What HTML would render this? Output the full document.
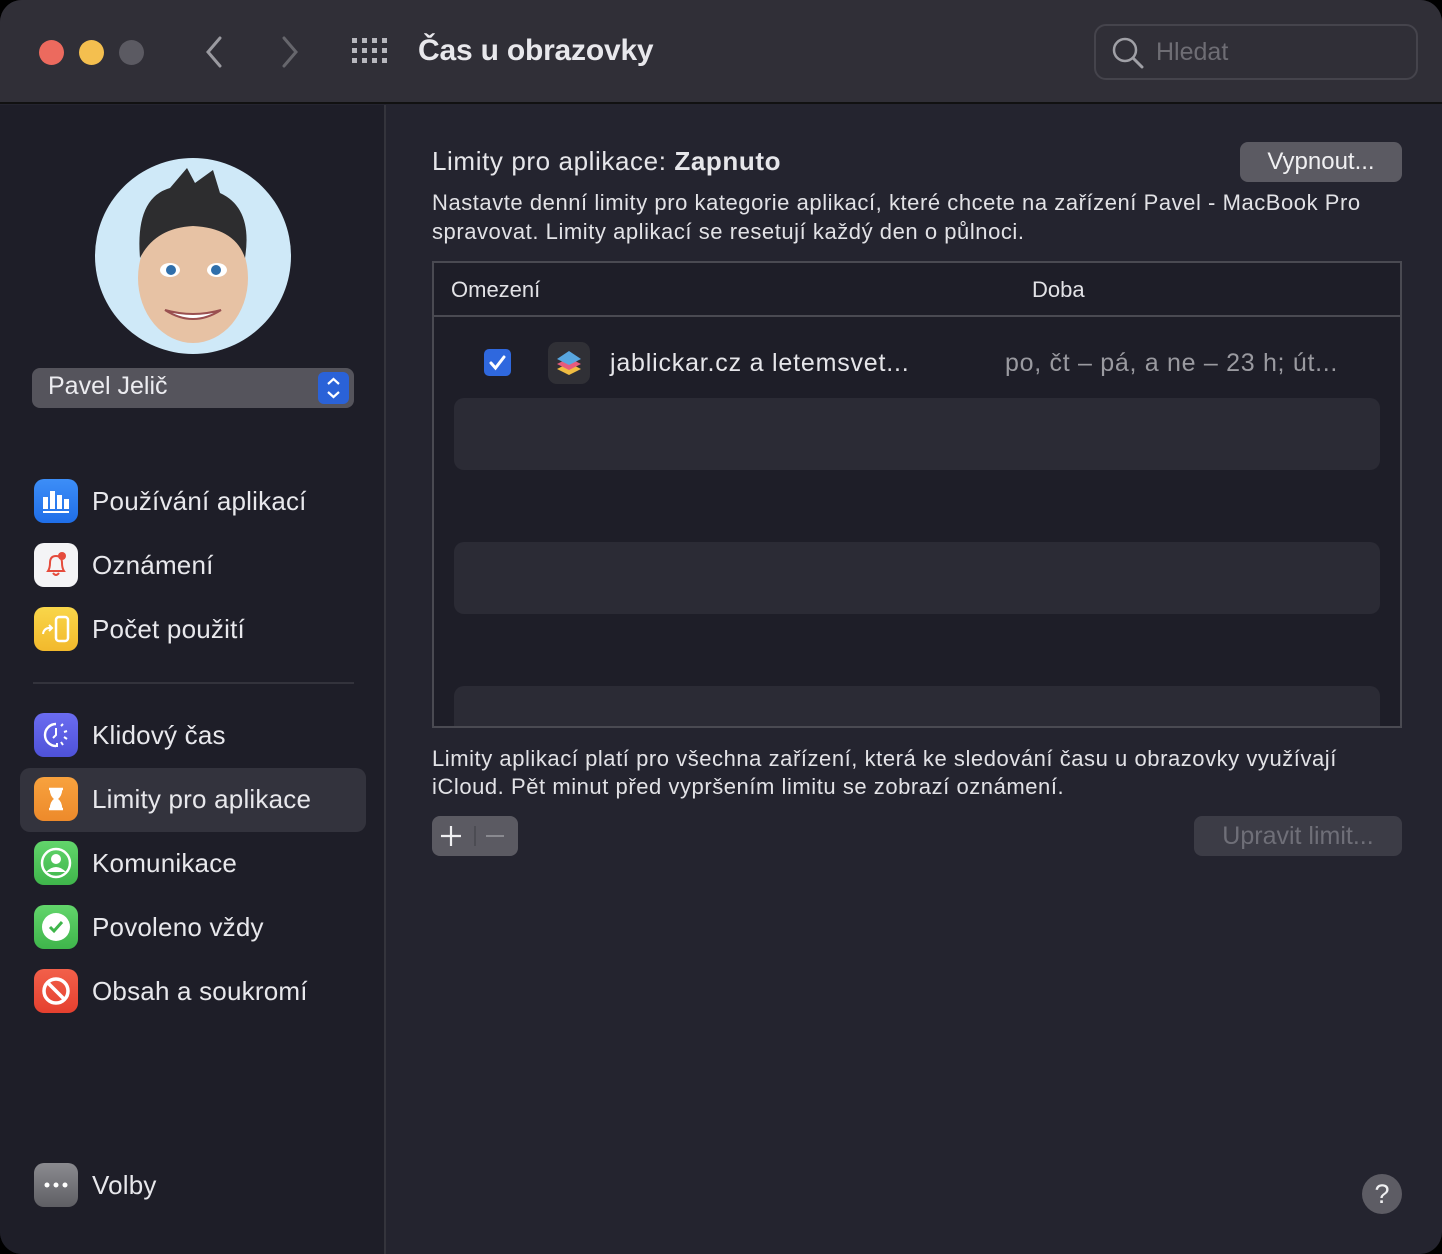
<!DOCTYPE html>
<html><head><meta charset="utf-8"><style>
*{margin:0;padding:0;box-sizing:border-box}
body{width:1442px;height:1254px;background:#000;font-family:"Liberation Sans",sans-serif;color:#e6e6ea;overflow:hidden;position:relative}
.win{position:absolute;left:0;top:0;width:1442px;height:1254px;border-radius:22px;overflow:hidden;background:#24242f}
.title{position:absolute;left:0;top:0;width:1442px;height:104px;background:#302f37;border-bottom:2px solid #111}
.side{position:absolute;left:0;top:105px;width:386px;height:1149px;background:#1e1e28;border-right:2px solid #34343c}
.dot{position:absolute;top:40px;width:25px;height:25px;border-radius:50%}
.abs{position:absolute;white-space:nowrap}
.item{position:absolute;left:34px;height:44px;display:flex;align-items:center;font-size:26px;color:#e8e8ec;letter-spacing:0.2px}
.ic{width:44px;height:44px;border-radius:10px;margin-right:14px;display:flex;align-items:center;justify-content:center;flex-shrink:0}
.txt{font-size:21px;color:#e2e2e6}
.para{font-size:22px;letter-spacing:0.55px;color:#e2e2e6}
.row{position:absolute;left:454px;width:926px;height:72px;background:#2b2b35;border-radius:10px}
</style></head><body>
<div class="win">
<div class="title">
 <div class="dot" style="left:39px;background:#ec6a5e"></div>
 <div class="dot" style="left:79px;background:#f4bf4f"></div>
 <div class="dot" style="left:119px;background:#5b5a62"></div>
 <svg class="abs" style="left:200px;top:34px" width="30" height="36"><path d="M20 4 L8 18 L20 32" stroke="#9a9aa0" stroke-width="3" fill="none" stroke-linecap="round"/></svg>
 <svg class="abs" style="left:274px;top:34px" width="30" height="36"><path d="M10 4 L22 18 L10 32" stroke="#66666c" stroke-width="3" fill="none" stroke-linecap="round"/></svg>
 <svg class="abs" style="left:352px;top:38px" width="38" height="28">
  <g fill="#b8b8be"><rect x="0" y="0" width="5" height="5"/><rect x="10" y="0" width="5" height="5"/><rect x="20" y="0" width="5" height="5"/><rect x="30" y="0" width="5" height="5"/>
  <rect x="0" y="10" width="5" height="5"/><rect x="10" y="10" width="5" height="5"/><rect x="20" y="10" width="5" height="5"/><rect x="30" y="10" width="5" height="5"/>
  <rect x="0" y="20" width="5" height="5"/><rect x="10" y="20" width="5" height="5"/><rect x="20" y="20" width="5" height="5"/><rect x="30" y="20" width="5" height="5"/></g></svg>
 <div class="abs" style="left:418px;top:34px;font-size:30px;letter-spacing:-0.2px;font-weight:bold;color:#e8e8ec">Čas u obrazovky</div>
 <div class="abs" style="left:1094px;top:24px;width:324px;height:56px;border:2px solid #45444c;border-radius:12px"></div>
 <svg class="abs" style="left:1110px;top:36px" width="36" height="36"><circle cx="15" cy="14" r="11" stroke="#a0a0a6" stroke-width="2.5" fill="none"/><path d="M23 22 L32 31" stroke="#a0a0a6" stroke-width="3" stroke-linecap="round"/></svg>
 <div class="abs" style="left:1156px;top:38px;font-size:25px;color:#6e6d74">Hledat</div>
</div>
<div class="side">
 <div class="abs" style="left:95px;top:53px;width:196px;height:196px;border-radius:50%;background:#cfe9f8;overflow:hidden">
  <svg width="196" height="196"><ellipse cx="98" cy="120" rx="55" ry="65" fill="#e7c2a4"/><path d="M45 100 Q40 40 75 30 L92 10 L100 25 L118 12 L125 35 Q158 50 150 100 Q140 70 98 68 Q60 70 45 100Z" fill="#2d2d2f"/><ellipse cx="75" cy="112" rx="10" ry="7" fill="#fff"/><ellipse cx="122" cy="112" rx="10" ry="7" fill="#fff"/><circle cx="76" cy="112" r="5" fill="#2f6eaa"/><circle cx="121" cy="112" r="5" fill="#2f6eaa"/><path d="M70 152 Q98 170 126 152 Q98 160 70 152Z" fill="#fff" stroke="#9a5050" stroke-width="2"/></svg>
 </div>
 <div class="abs" style="left:32px;top:263px;width:322px;height:40px;background:#55545c;border-radius:8px"></div>
 <div class="abs" style="left:48px;top:267px;font-size:25px;color:#ececf0">Pavel Jelič</div>
 <div class="abs" style="left:318px;top:267px;width:31px;height:32px;background:#2a62d8;border-radius:6px"><svg width="31" height="32"><path d="M10 12 L15.5 7 L21 12 M10 20 L15.5 25 L21 20" stroke="#fff" stroke-width="2.2" fill="none"/></svg></div>

 <div class="item" style="top:374px"><div class="ic" style="background:linear-gradient(#3d8ef7,#1f6ee8)"><svg width="30" height="28"><g fill="#fff"><rect x="2" y="10" width="5" height="12"/><rect x="9" y="4" width="5" height="18"/><rect x="16" y="8" width="5" height="14"/><rect x="23" y="12" width="5" height="10"/><rect x="2" y="24" width="26" height="2"/></g></svg></div>Používání aplikací</div>
 <div class="item" style="top:438px"><div class="ic" style="background:#f4f4f6"><svg width="30" height="30"><path d="M7 21 Q9 18 9 13 Q9 6 15 6 Q21 6 21 13 Q21 18 23 21Z M12 23 Q15 27 18 23" stroke="#e54b3c" stroke-width="2" fill="none"/><circle cx="21" cy="6" r="4" fill="#e54b3c"/></svg></div>Oznámení</div>
 <div class="item" style="top:502px"><div class="ic" style="background:linear-gradient(#f9d64a,#f2b92c)"><svg width="34" height="30"><rect x="17" y="3" width="12" height="24" rx="3" stroke="#fff" stroke-width="2.5" fill="none"/><path d="M4 20 Q5 13 13 14 M10 11 L13 14 L10 17" stroke="#fff" stroke-width="2" fill="none"/></svg></div>Počet použití</div>
 <div class="abs" style="left:33px;top:577px;width:321px;height:2px;background:#33333c"></div>
 <div class="item" style="top:608px"><div class="ic" style="background:linear-gradient(#6b6cf0,#4e52d8)"><svg width="30" height="30"><path d="M15 4 A11 11 0 1 0 15 26" stroke="#fff" stroke-width="2.4" fill="none"/><path d="M15 8 V15 L12 18" stroke="#fff" stroke-width="2" fill="none"/><g stroke="#fff" stroke-width="2"><path d="M20 6 L22 4 M23 12 L26 11 M23 17 L26 19 M20 22 L22 25 M16 23 V27"/></g></svg></div>Klidový čas</div>
 <div class="abs" style="left:20px;top:663px;width:346px;height:64px;background:#33333d;border-radius:10px"></div>
 <div class="item" style="top:672px"><div class="ic" style="background:linear-gradient(#f8a23e,#ed8a2b)"><svg width="30" height="30"><path d="M8 5 H22 M8 25 H22 M10 5 Q10 12 15 15 Q20 12 20 5 M10 25 Q10 18 15 15 Q20 18 20 25" stroke="#fff" stroke-width="2.5" fill="#fff"/></svg></div>Limity pro aplikace</div>
 <div class="item" style="top:736px"><div class="ic" style="background:linear-gradient(#62d56b,#3fb54b)"><svg width="34" height="34"><circle cx="17" cy="17" r="14" stroke="#fff" stroke-width="2.5" fill="none"/><circle cx="17" cy="13" r="5" fill="#fff"/><path d="M7 26 Q17 16 27 26" fill="#fff"/></svg></div>Komunikace</div>
 <div class="item" style="top:800px"><div class="ic" style="background:linear-gradient(#62d56b,#3fb54b)"><svg width="34" height="34"><circle cx="17" cy="17" r="14" fill="#fff"/><path d="M11 17 L15 21 L23 12" stroke="#3fb54b" stroke-width="3" fill="none"/></svg></div>Povoleno vždy</div>
 <div class="item" style="top:864px"><div class="ic" style="background:linear-gradient(#f2604a,#e5402f)"><svg width="34" height="34"><circle cx="17" cy="17" r="12" stroke="#fff" stroke-width="3.5" fill="none"/><path d="M9 9 L25 25" stroke="#fff" stroke-width="3.5"/></svg></div>Obsah a soukromí</div>
 <div class="item" style="top:1058px"><div class="ic" style="background:linear-gradient(#8b8b90,#5f5f64)"><svg width="30" height="10"><circle cx="6" cy="5" r="2.5" fill="#fff"/><circle cx="15" cy="5" r="2.5" fill="#fff"/><circle cx="24" cy="5" r="2.5" fill="#fff"/></svg></div>Volby</div>
</div>

<div class="abs" style="left:432px;top:146px;font-size:26px;letter-spacing:0.6px;color:#e6e6ea">Limity pro aplikace: <b>Zapnuto</b></div>
<div class="abs" style="left:1240px;top:142px;width:162px;height:40px;background:#5b5a62;border-radius:8px;font-size:24px;color:#f0f0f2;text-align:center;line-height:40px">Vypnout...</div>
<div class="abs para" style="left:432px;top:188px;line-height:29px">Nastavte denní limity pro kategorie aplikací, které chcete na zařízení Pavel - MacBook Pro<br>spravovat. Limity aplikací se resetují každý den o půlnoci.</div>

<div class="abs" style="left:432px;top:261px;width:970px;height:467px;border:2px solid #4a4a52;background:#1e1e28;overflow:hidden">
 <div class="abs" style="left:0;top:52px;width:970px;height:2px;background:#4a4a52"></div>
 <div class="abs txt" style="left:17px;top:14px;font-size:22px">Omezení</div>
 <div class="abs txt" style="left:598px;top:14px;font-size:22px">Doba</div>
 <div class="abs" style="left:50px;top:86px;width:27px;height:27px;border-radius:5px;background:#2f68de"><svg width="27" height="27"><path d="M7 14 L11.5 19 L20 8" stroke="#fff" stroke-width="3" fill="none" stroke-linecap="round"/></svg></div>
 <div class="abs" style="left:114px;top:79px;width:42px;height:42px;border-radius:9px;background:#303036"><svg width="42" height="42"><path d="M9 27 L21 33 L33 27 L21 21Z" fill="#f0bc42"/><path d="M9 22 L21 28 L33 22 L21 16Z" fill="#e75a7c"/><path d="M9 17 L21 23 L33 17 L21 9Z" fill="#58a6e0"/></svg></div>
 <div class="abs" style="left:176px;top:86px;font-size:25px;letter-spacing:0.8px;color:#e6e6ea">jablickar.cz a letemsvet...</div>
 <div class="abs" style="left:571px;top:86px;font-size:25px;letter-spacing:0.7px;color:#9a9aa0">po, čt – pá, a ne – 23 h; út...</div>
</div>
<div class="row" style="top:398px"></div>
<div class="row" style="top:542px"></div>
<div class="row" style="top:686px;height:40px;border-radius:10px 10px 0 0"></div>

<div class="abs para" style="left:432px;top:745px;line-height:28px">Limity aplikací platí pro všechna zařízení, která ke sledování času u obrazovky využívají<br>iCloud. Pět minut před vypršením limitu se zobrazí oznámení.</div>
<div class="abs" style="left:432px;top:816px;width:86px;height:40px;background:#5b5a62;border-radius:8px">
 <svg width="86" height="40"><path d="M19 10 V30 M9 20 H29" stroke="#f0f0f2" stroke-width="2.2"/><path d="M43 10 V30" stroke="#48474e" stroke-width="1.5"/><path d="M54 20 H72" stroke="#8a8a90" stroke-width="2"/></svg>
</div>
<div class="abs" style="left:1194px;top:816px;width:208px;height:40px;background:#3c3c46;border-radius:8px;font-size:25px;color:#6f6f78;text-align:center;line-height:40px">Upravit limit...</div>
<div class="abs" style="left:1362px;top:1174px;width:40px;height:40px;border-radius:50%;background:#5d5c64;color:#f0f0f2;font-size:27px;text-align:center;line-height:40px">?</div>
</div>
</body></html>
